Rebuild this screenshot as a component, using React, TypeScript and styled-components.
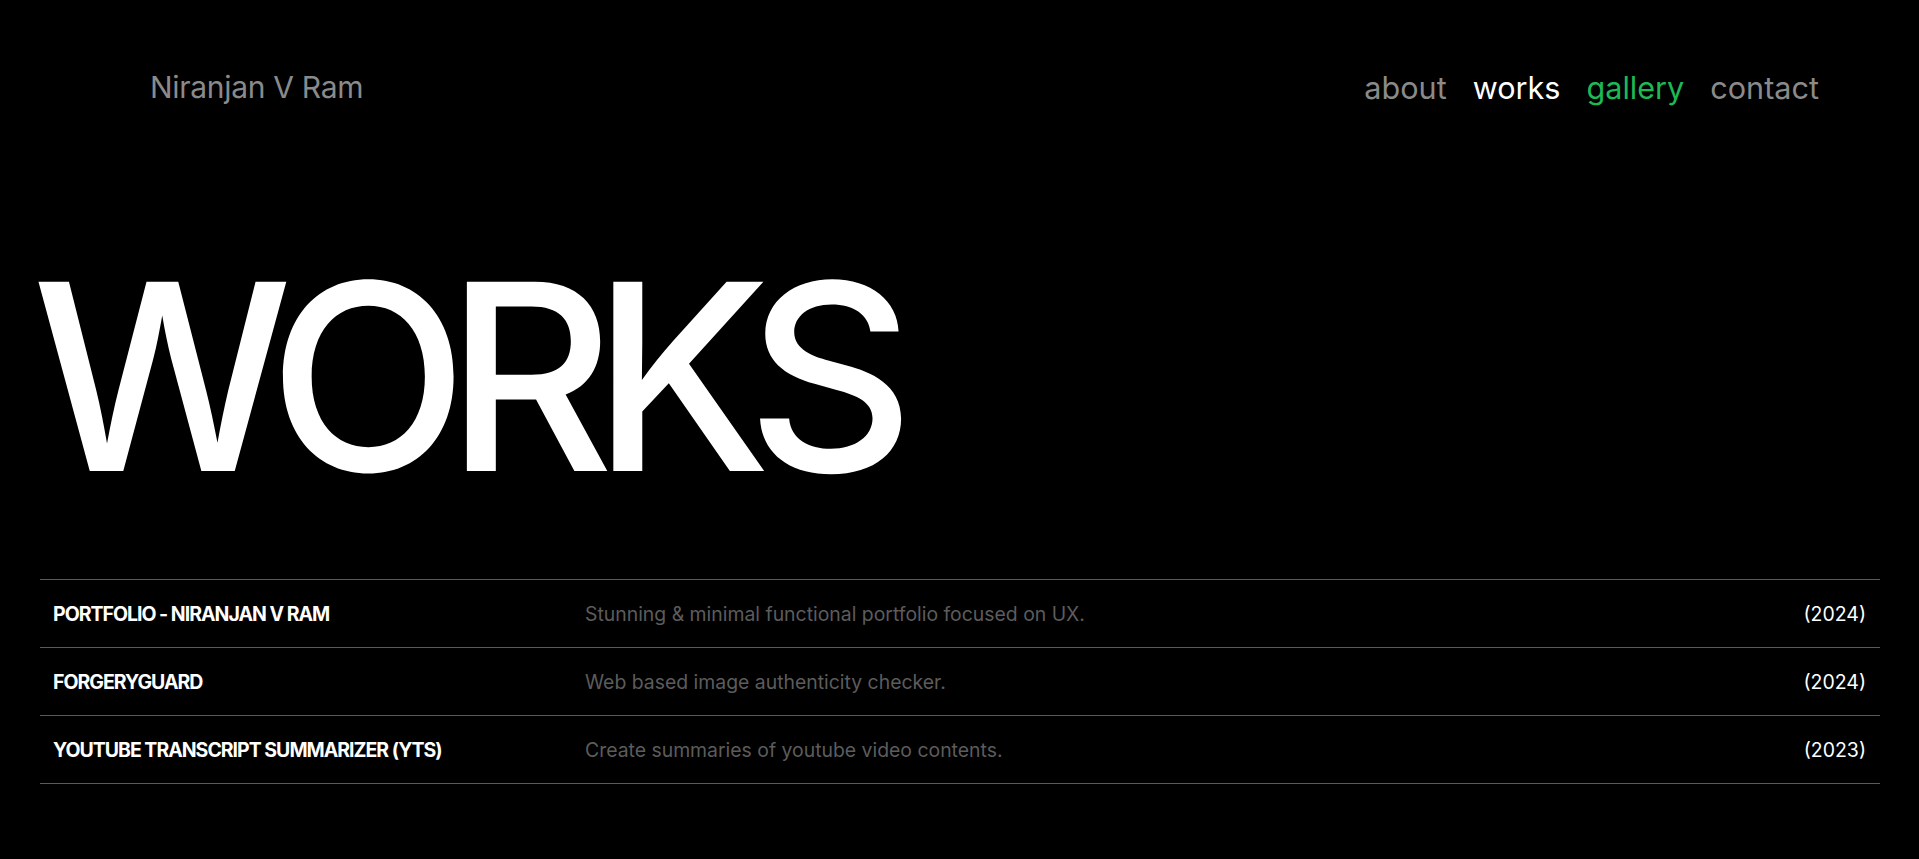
import React from "react";
import styled, { createGlobalStyle } from "styled-components";

const Global = createGlobalStyle`
  html, body { margin: 0; padding: 0; background: #000; }
  body { font-family: Inter, "Noto Sans", sans-serif; color: #fff; }
  * { box-sizing: border-box; }
`;

const Page = styled.div`
  min-height: 859px;
  background: #000;
  display: flex;
  flex-direction: column;
`;

const Header = styled.header`
  display: flex;
  justify-content: space-between;
  align-items: center;
  padding: 64px 100px 0 150px;
  height: 110px;
`;

const Brand = styled.div`
  font-size: 30px;
  font-weight: 400;
  color: #8a8a8a;
  letter-spacing: -0.3px;
`;

const Nav = styled.nav`
  display: flex;
  gap: 26px;
`;

const NavLink = styled.a<{ $tone: string }>`
  font-size: 30.6px;
  font-weight: 400;
  letter-spacing: 0;
  text-decoration: none;
  color: ${(p) => p.$tone};
`;

const Hero = styled.h1`
  margin: 157px 0 0 32px;
  font-size: 260px;
  line-height: 220px;
  font-weight: 500;
  letter-spacing: -22px;
  color: #fff;
`;

const Table = styled.div`
  margin: 92px 39px 0 40px;
  border-top: 1px solid #5a5a5a;
`;

const Row = styled.div`
  display: grid;
  grid-template-columns: 532px 1fr auto;
  align-items: center;
  height: 68px;
  padding: 0 14px 0 13px;
  border-bottom: 1px solid #5a5a5a;
`;

const Title = styled.div`
  font-size: 19.5px;
  font-weight: 700;
  letter-spacing: -1px;
  color: #fff;
`;

const Desc = styled.div`
  font-size: 19.4px;
  font-weight: 400;
  color: #5c5c5c;
`;

const Year = styled.div`
  font-size: 19.5px;
  color: #fff;
`;

const works = [
  { t: "PORTFOLIO - NIRANJAN V RAM", d: "Stunning & minimal functional portfolio focused on UX.", y: "(2024)" },
  { t: "FORGERYGUARD", d: "Web based image authenticity checker.", y: "(2024)" },
  { t: "YOUTUBE TRANSCRIPT SUMMARIZER (YTS)", d: "Create summaries of youtube video contents.", y: "(2023)" },
];

export default function App() {
  return (
    <Page>
      <Global />
      <Header>
        <Brand>Niranjan V Ram</Brand>
        <Nav>
          <NavLink $tone="#8a8a8a" href="#">about</NavLink>
          <NavLink $tone="#ffffff" href="#">works</NavLink>
          <NavLink $tone="#1db954" href="#">gallery</NavLink>
          <NavLink $tone="#8a8a8a" href="#">contact</NavLink>
        </Nav>
      </Header>
      <Hero>WORKS</Hero>
      <Table>
        {works.map((w) => (
          <Row key={w.t}>
            <Title>{w.t}</Title>
            <Desc>{w.d}</Desc>
            <Year>{w.y}</Year>
          </Row>
        ))}
      </Table>
    </Page>
  );
}
